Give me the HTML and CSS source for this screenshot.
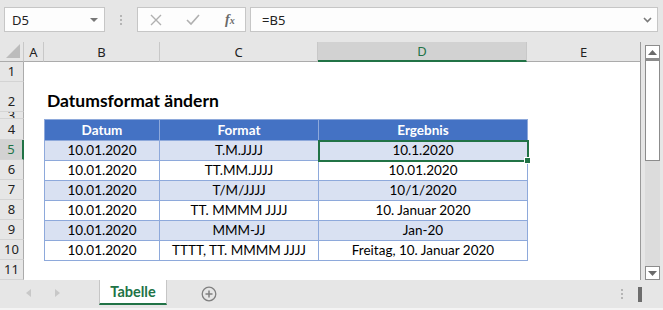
FILE: index.html
```
<!DOCTYPE html>
<html><head>
<meta charset="utf-8">
<title>Datumsformat ändern</title>
<link rel="stylesheet" href="styles.css">
</head><body>
<div class="app">
<div class="fbar">
<div class="namebox"><span>D5</span><span class="dd"></span></div>
<svg class="grip" width="3" height="11"><rect x="0" y="0" width="2" height="2" fill="#b5b5b5"/><rect x="0" y="4" width="2" height="2" fill="#b5b5b5"/><rect x="0" y="8" width="2" height="2" fill="#b5b5b5"/></svg>
<div class="fbtns">
<svg width="12" height="12"><path d="M1 1 L11 11 M11 1 L1 11" stroke="#b0b0b0" stroke-width="1.4"/></svg>
<svg width="14" height="12"><path d="M1 6 L5 10 L13 1" stroke="#b0b0b0" stroke-width="1.6" fill="none"/></svg>
<span class="fx">f<sub>x</sub></span>
</div>
<div class="finput"><span>=B5</span><svg width="9" height="6"><path d="M1 1 L4.5 4.5 L8 1" stroke="#7a7a7a" stroke-width="1.6" fill="none"/></svg></div>
</div>

<div class="main">
<div class="sheet">
<div class="colheads">
<div class="corner"><svg width="14" height="14"><path d="M14 0 L14 14 L0 14 Z" fill="#bcbcbc"/></svg></div>
<div class="ch ca">A</div>
<div class="ch cb">B</div>
<div class="ch cc">C</div>
<div class="ch cd on">D</div>
<div class="ch ce">E</div>
</div>
<div class="body">
<div class="rowheads">
<div class="rh r20">1</div>
<div class="rh r30">2</div>
<div class="rh r7"><span>3</span></div>
<div class="rh r21">4</div>
<div class="rh r20 on">5</div>
<div class="rh r20">6</div>
<div class="rh r20">7</div>
<div class="rh r20">8</div>
<div class="rh r20">9</div>
<div class="rh r20">10</div>
<div class="rh r20">11</div>
</div>
<div class="cells">
<div class="title">Datumsformat ändern</div>
<table class="data">
<colgroup><col class="wb"><col class="wc"><col class="wd"></colgroup>
<tr class="head"><th>Datum</th><th>Format</th><th>Ergebnis</th></tr>
<tr class="band"><td>10.01.2020</td><td>T.M.JJJJ</td><td class="sel">10.1.2020</td></tr>
<tr><td>10.01.2020</td><td>TT.MM.JJJJ</td><td>10.01.2020</td></tr>
<tr class="band"><td>10.01.2020</td><td>T/M/JJJJ</td><td>10/1/2020</td></tr>
<tr><td>10.01.2020</td><td>TT. MMMM JJJJ</td><td>10. Januar 2020</td></tr>
<tr class="band"><td>10.01.2020</td><td>MMM-JJ</td><td>Jan-20</td></tr>
<tr><td>10.01.2020</td><td>TTTT, TT. MMMM JJJJ</td><td>Freitag, 10. Januar 2020</td></tr>
</table>
</div>
</div>
</div>
<div class="vscroll">
<div class="sbtn"><svg width="9" height="5"><path d="M0 5 L4.5 0 L9 5 Z" fill="#6a6a6a"/></svg></div>
<div class="thumb"></div>
<div class="track"></div>
<div class="sbtn"><svg width="9" height="5"><path d="M0 0 L9 0 L4.5 5 Z" fill="#6a6a6a"/></svg></div>
</div>
</div>

<div class="tabbar">
<div class="navs">
<svg width="5" height="8"><path d="M5 0 L0 4 L5 8 Z" fill="#c8c8c8"/></svg>
<svg width="5" height="8"><path d="M0 0 L5 4 L0 8 Z" fill="#c8c8c8"/></svg>
</div>
<div class="tab">Tabelle</div>
<div class="addtab"><svg width="16" height="16"><circle cx="8" cy="8" r="6.8" stroke="#808080" stroke-width="1.3" fill="none"/><path d="M8 4.5 V11.5 M4.5 8 H11.5" stroke="#808080" stroke-width="1.5"/></svg></div>
<div class="tabright">
<svg width="3" height="11"><rect x="0" y="0" width="2" height="2" fill="#b5b5b5"/><rect x="0" y="4" width="2" height="2" fill="#b5b5b5"/><rect x="0" y="8" width="2" height="2" fill="#b5b5b5"/></svg>
<div class="hthumb"></div>
</div>
</div>
</div>
</body></html>
```

FILE: styles.css
```
body {margin: 0; background: #e6e6e6; font-family: "Noto Sans", sans-serif; overflow: hidden;}
.app {width: 663px; height: 310px; display: flex; flex-direction: column;}

/* formula bar */
.fbar {height: 42px; box-sizing: border-box; padding: 7px 0 0 4px; display: flex; align-items: flex-start;}
.namebox {width: 101px; height: 25px; box-sizing: border-box; border: 1px solid #c6c6c6; background: #fdfdfd; display: flex; align-items: center; justify-content: space-between; padding: 0 6px 0 7px; font-size: 13px; color: #222;}
.dd {width: 0; height: 0; border-left: 4px solid transparent; border-right: 4px solid transparent; border-top: 4px solid #777;}
.grip {margin: 8px 14px 0 15px;}
.fbtns {width: 109px; height: 25px; box-sizing: border-box; border: 1px solid #c6c6c6; background: #fdfdfd; display: flex; align-items: center; padding-left: 12px; gap: 24px;}
.fx {font-family: "Liberation Serif", serif; font-style: italic; font-size: 14px; color: #6a6a6a; font-weight: bold; margin-left: 1px;}
.fx sub {font-size: 10px; vertical-align: baseline;}
.finput {width: 408px; height: 25px; box-sizing: border-box; border: 1px solid #c6c6c6; background: #fdfdfd; margin-left: 4px; display: flex; align-items: center; justify-content: space-between; padding: 0 5px 0 11px; font-size: 13px; color: #222;}

/* grid */
.main {height: 238px; display: flex;}
.sheet {width: 641px; display: flex; flex-direction: column;}
.colheads {height: 20px; display: flex; font-size: 13px; color: #222;}
.corner {width: 24px; box-sizing: border-box; border-right: 1px solid #c8c8c8; border-bottom: 1px solid #ababab; display: flex; align-items: flex-end; justify-content: flex-end; padding: 0 3px 3px 0;}
.ch {box-sizing: border-box; border-right: 1px solid #c8c8c8; border-bottom: 1px solid #ababab; display: flex; align-items: center; justify-content: center;}
.ca {width: 20px;}
.cb {width: 116px;}
.cc {width: 158px;}
.cd {width: 209px;}
.ce {width: 114px; border-right: 1px solid #9a9a9a;}
.ch.on {background: #d2d2d2; color: #217346; border-bottom: 2px solid #217346;}

.body {flex: 1; display: flex;}
.rowheads {width: 24px; display: flex; flex-direction: column;}
.rh {box-sizing: border-box; border-bottom: 1px solid #d4d4d4; border-right: 1px solid #ababab; font-size: 13px; color: #222; display: flex; align-items: flex-end; justify-content: center; padding-bottom: 1px;}
.r20 {height: 20px;}
.r30 {height: 30px;}
.r7 {height: 7px; overflow: hidden; align-items: flex-start; padding: 0;}
.r7 span {display: block; height: 6px; line-height: 6px; overflow: hidden; font-size: 13px;}
.r21 {height: 21px;}
.rh.on {background: #d2d2d2; color: #217346; border-right: 2px solid #217346;}

.cells {flex: 1; background: #fff; border-right: 1px solid #9a9a9a; padding: 20px 0 0 20px;}
.title {height: 30px; box-sizing: border-box; padding: 8px 0 0 3px; font-family: Lato, sans-serif; font-weight: bold; font-size: 17.5px; color: #000;}

.data {margin-top: 7px; border-collapse: collapse; font-family: Lato, sans-serif; font-size: 13.5px; color: #000;}
.wb {width: 115px;}
.wc {width: 159px;}
.wd {width: 209px;}
.data th, .data td {border: 1px solid #8ea9db; padding: 0; text-align: center; height: 19px; line-height: 19px;}
.data th {background: #4472c4; color: #fff; font-weight: bold; height: 20px; border-color: #8ea9db;}
.data .band td {background: #d9e1f2;}
.data .sel {position: relative;}
.data .sel::after {content: ""; position: absolute; left: -1px; top: -1px; right: -2px; bottom: -2px; border: 2px solid #217346;}
.data .sel::before {content: ""; position: absolute; right: -4px; bottom: -4px; width: 5px; height: 5px; background: #217346; border: 1px solid #fff; z-index: 1;}

/* scrollbar */
.vscroll {width: 15px; margin-left: 4px; margin-top: 3px; display: flex; flex-direction: column; background: #dcdcdc;}
.sbtn {height: 14px; box-sizing: border-box; border: 1px solid #8c8c8c; background: #fff; display: flex; align-items: center; justify-content: center;}
.thumb {height: 102px; box-sizing: border-box; border: 1px solid #8c8c8c; border-top-width: 2px; background: #fff;}
.track {flex: 1;}

/* tabs */
.tabbar {height: 30px; box-sizing: border-box; border-bottom: 2px solid #f4f4f4; display: flex; align-items: flex-start;}
.navs {width: 99px; display: flex; gap: 24px; padding: 9px 0 0 26px; box-sizing: border-box;}
.tab {width: 68px; height: 25px; box-sizing: border-box; background: #fff; border-bottom: 2px solid #217346; border-left: 1px solid #c6c6c6; border-right: 1px solid #c6c6c6; color: #217346; font-family: Lato, sans-serif; font-weight: bold; font-size: 14.5px; display: flex; align-items: center; justify-content: center;}
.addtab {margin: 5px 0 0 34px;}
.tabright {margin-left: auto; display: flex; align-items: flex-start; gap: 14px; padding: 7px 21px 0 0;}
.tabright svg {margin-top: 2px;}
.hthumb {width: 4px; height: 15px; background: #6d6d6d;}
```
